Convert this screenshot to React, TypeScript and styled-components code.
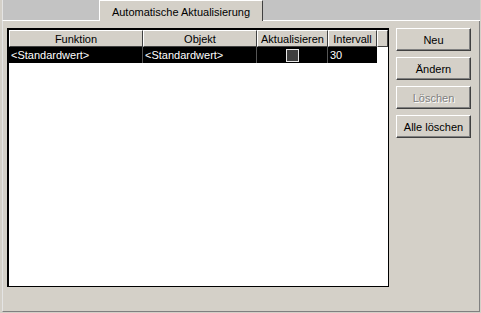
import React from 'react'
import styled, { createGlobalStyle } from 'styled-components'

const Global = createGlobalStyle`
  html, body {
    margin: 0;
    padding: 0;
    background: #d4d0c8;
  }
  body {
    font-family: "Liberation Sans", Arial, sans-serif;
    font-size: 11px;
  }
`

const columns = [
  { title: 'Funktion', width: 134 },
  { title: 'Objekt', width: 114 },
  { title: 'Aktualisieren', width: 71 },
  { title: 'Intervall', width: 49 },
]

const Window = styled.div`
  width: 481px;
  height: 313px;
  box-sizing: border-box;
  padding: 0 1px 1px 2px;
  display: flex;
  flex-direction: column;
  background: #d4d0c8;
  color: #000;
  font-family: "Liberation Sans", Arial, sans-serif;
  font-size: 11px;
`

const TabStrip = styled.div`
  display: flex;
  height: 21px;
  flex-shrink: 0;
`

const Filler = styled.div<{ $grow?: boolean }>`
  ${p => (p.$grow ? 'flex: 1;' : 'width: 97px;')}
  background: #c3c3c3;
  border-bottom: 1px solid #ffffff;
  border-left: ${p => (p.$grow ? 'none' : '1px solid #e4e4e4')};
  box-sizing: border-box;
`

const ActiveTab = styled.div`
  width: 164px;
  box-sizing: border-box;
  background: #d4d0c8;
  border-top: 1px solid #ffffff;
  border-left: 1px solid #ffffff;
  border-right: 1px solid #404040;
  display: flex;
  align-items: center;
  justify-content: center;
  padding-top: 1px;
`

const Panel = styled.div`
  flex: 1;
  display: flex;
  gap: 7px;
  box-sizing: border-box;
  padding: 7px 0 0 4px;
  border-left: 1px solid #e4e4e4;
  border-right: 1px solid #808080;
  border-bottom: 1px solid #808080;
`

const ListBox = styled.div`
  width: 382px;
  height: 259px;
  box-sizing: border-box;
  background: #ffffff;
  border-top: 2px solid #000;
  border-left: 2px solid #000;
  border-right: 1px solid #000;
  border-bottom: 1px solid #000;
  display: flex;
  flex-direction: column;
`

const HeaderRow = styled.div`
  display: flex;
  height: 17px;
`

const HeaderCell = styled.div<{ $w?: number }>`
  ${p => (p.$w ? `width: ${p.$w}px;` : 'flex: 1;')}
  box-sizing: border-box;
  background: #d4d0c8;
  border-top: 1px solid #ffffff;
  border-left: 1px solid #ffffff;
  border-right: 1px solid #404040;
  border-bottom: 1px solid #404040;
  display: flex;
  align-items: center;
  justify-content: center;
  white-space: nowrap;
  overflow: hidden;
`

const DataRow = styled.div`
  display: flex;
  height: 16px;
`

const DataCell = styled.div<{ $w: number; $center?: boolean; $last?: boolean }>`
  width: ${p => p.$w}px;
  box-sizing: border-box;
  background: #000;
  color: #fff;
  border-right: ${p => (p.$last ? 'none' : '1px solid #555')};
  display: flex;
  align-items: center;
  justify-content: ${p => (p.$center ? 'center' : 'flex-start')};
  padding-left: ${p => (p.$center ? 0 : 2)}px;
  white-space: nowrap;
`

const CheckBox = styled.span`
  width: 13px;
  height: 13px;
  box-sizing: border-box;
  border: 1px solid #e8e8e8;
  background: #404040;
`

const ButtonColumn = styled.div`
  display: flex;
  flex-direction: column;
  gap: 6px;
`

const Button = styled.div<{ $disabled?: boolean }>`
  width: 75px;
  height: 23px;
  box-sizing: border-box;
  background: #d4d0c8;
  border-top: 1px solid #ffffff;
  border-left: 1px solid #ffffff;
  border-right: 1px solid #404040;
  border-bottom: 1px solid #404040;
  box-shadow: inset -1px -1px 0 #808080;
  display: flex;
  align-items: center;
  justify-content: center;
  color: ${p => (p.$disabled ? '#808080' : '#000')};
  text-shadow: ${p => (p.$disabled ? '1px 1px 0 #ffffff' : 'none')};
`

export default function App() {
  return (
    <>
      <Global />
      <Window>
        <TabStrip>
          <Filler />
          <ActiveTab>Automatische Aktualisierung</ActiveTab>
          <Filler $grow />
        </TabStrip>
        <Panel>
          <ListBox>
            <HeaderRow>
              {columns.map(c => (
                <HeaderCell key={c.title} $w={c.width}>
                  {c.title}
                </HeaderCell>
              ))}
              <HeaderCell />
            </HeaderRow>
            <DataRow>
              <DataCell $w={134}>&lt;Standardwert&gt;</DataCell>
              <DataCell $w={114}>&lt;Standardwert&gt;</DataCell>
              <DataCell $w={71} $center>
                <CheckBox />
              </DataCell>
              <DataCell $w={49} $last>30</DataCell>
            </DataRow>
          </ListBox>
          <ButtonColumn>
            <Button>Neu</Button>
            <Button>Ändern</Button>
            <Button $disabled>Löschen</Button>
            <Button>Alle löschen</Button>
          </ButtonColumn>
        </Panel>
      </Window>
    </>
  )
}
